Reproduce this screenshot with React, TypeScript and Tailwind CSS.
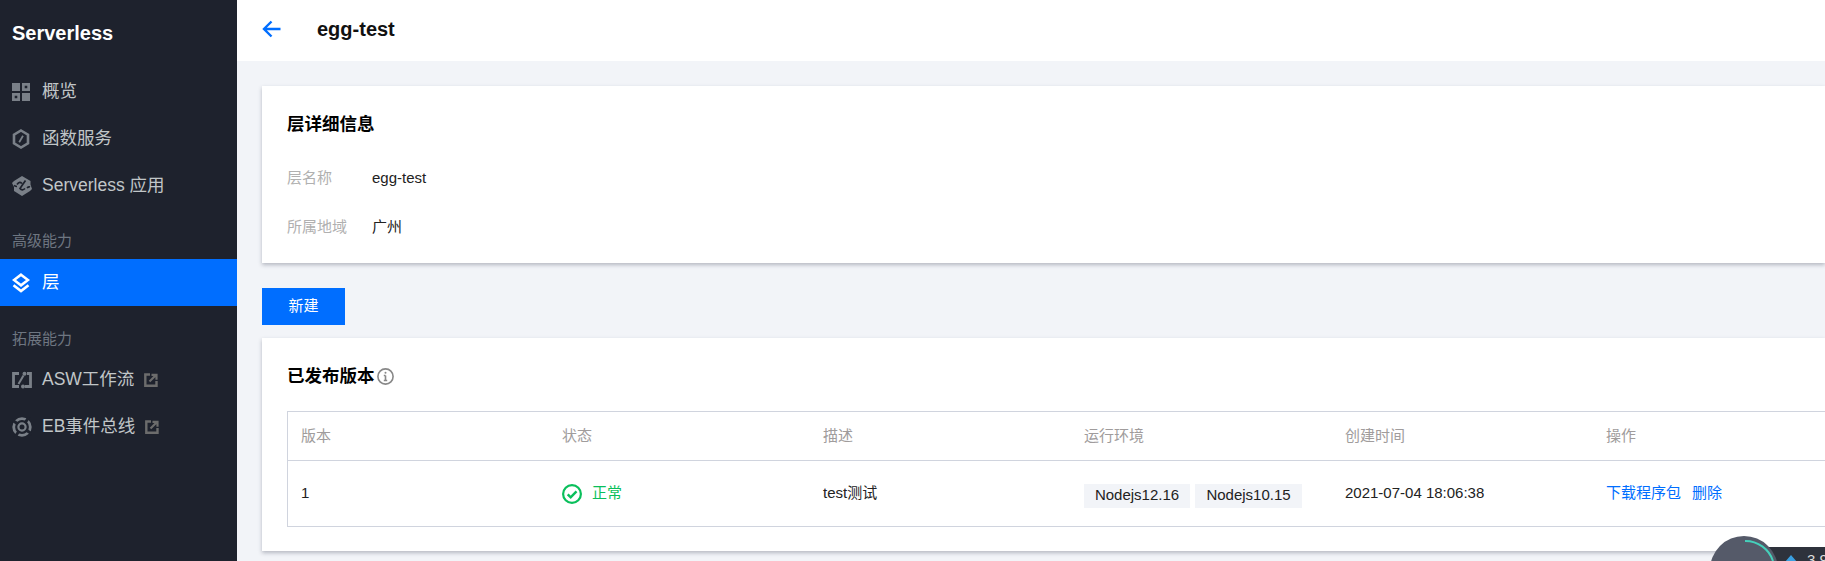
import type { ReactNode } from "react";

const cjk = "font-['Liberation_Sans','Noto_Sans_CJK_SC',sans-serif]";
const iconGray = "#7a8088";

function OverviewIcon() {
  return (
    <svg width="18" height="18" viewBox="0 0 18 18" fill={iconGray}>
      <path fillRule="evenodd" d="M0 0h8v8H0zM10 0h8v8h-8zm2.700 2.700v2.600h2.600V2.700zM0 10h8v8H0zm2.700 2.700v2.600h2.600v-2.600zM10 10h8v8h-8z" />
    </svg>
  );
}

function FunctionIcon() {
  return (
    <svg width="18" height="20" viewBox="0 0 18 20" fill="none" stroke={iconGray} strokeWidth="2.600">
      <path d="M9 1.500l7 4.200v8.600l-7 4.200-7-4.200V5.700z" />
      <path d="M11 6.800L7.200 13.200" strokeWidth="1.800" />
    </svg>
  );
}

function AppIcon() {
  return (
    <svg width="20" height="20" viewBox="0 0 20 20">
      <path d="M10 0l8.500 5v3.500L20 13l-2 2-8 5-8-5V11L0 7l2-2z" fill={iconGray} />
      <path d="M5 8.500C7 5.500 8.500 6 10 7.500M13.500 4.500L10 9.500l-2 3c1.500 2 3.500 1.500 5 0M15 12c1-1 2-1.500 3-1M2 9.500c1 .5 2 1 3 1" fill="none" stroke="#1e222d" strokeWidth="1.700" />
    </svg>
  );
}

function LayerIcon() {
  return (
    <svg width="18" height="20" viewBox="0 0 18 20" fill="none" stroke="#fff" strokeWidth="2.600">
      <path d="M9 1.700L16 7l-7 5.300L2 7z" />
      <path d="M1.500 12.200L9 18l7.500-5.800" />
    </svg>
  );
}

function FlowIcon() {
  return (
    <svg width="20" height="18" viewBox="0 0 20 18" fill="none" stroke={iconGray} strokeWidth="2.800">
      <path d="M7 2.500H1.500v13H7M13 15.500h5.500v-13H15" />
      <path d="M6.500 13l5-8.500" strokeWidth="2" />
      <circle cx="12.500" cy="2.800" r="2" fill={iconGray} stroke="none" />
      <circle cx="11" cy="15.500" r="2" fill={iconGray} stroke="none" />
    </svg>
  );
}

function EventIcon() {
  return (
    <svg width="20" height="20" viewBox="0 0 20 20" fill="none" stroke={iconGray}>
      <circle cx="10" cy="10" r="8.300" strokeWidth="2.800" />
      <circle cx="10" cy="10" r="3.600" strokeWidth="2.200" />
      {/* the dark cuts split the outer ring into separate arcs */}
      <path d="M0 3l6 4M20 17l-6-4M17 0l-4 6M3 20l4-6" stroke="#1e222d" strokeWidth="3" />
    </svg>
  );
}

function ExternalIcon() {
  return (
    <svg width="14" height="14" viewBox="0 0 14 14" fill="none" stroke="#6c6c6c" strokeWidth="2.400">
      <path d="M6 1.500H1.300v11.200h11.200V8" />
      <path d="M5.500 8.500L11.500 2.500M7.500 1.800h5v5" strokeWidth="2.200" />
    </svg>
  );
}

function NavItem({ icon, label, active, external }: { icon: ReactNode; label: string; active?: boolean; external?: boolean }) {
  return (
    <div className={`flex h-[47px] items-center pl-[12px] text-[17.5px] ${active ? "bg-[#006eff] text-white" : "text-[#c1c6c8]"}`}>
      <span className="flex w-[30px] shrink-0 items-center">{icon}</span>
      <span>{label}</span>
      {external && (
        <span className="ml-[10px] flex items-center">
          <ExternalIcon />
        </span>
      )}
    </div>
  );
}

function Sidebar() {
  return (
    <aside className="flex w-[237px] shrink-0 flex-col bg-[#1e222d]">
      <div className="flex h-[68px] items-center pb-[2px] pl-3 text-xl leading-none font-bold text-white">Serverless</div>
      <NavItem icon={<OverviewIcon />} label="概览" />
      <NavItem icon={<FunctionIcon />} label="函数服务" />
      <NavItem icon={<AppIcon />} label="Serverless 应用" />
      <div className="flex h-[50px] items-end pb-[8px] pl-3 text-[15px] leading-5 text-[#6e7681]">高级能力</div>
      <NavItem icon={<LayerIcon />} label="层" active />
      <div className="flex h-[50px] items-end pb-[7px] pl-3 text-[15px] leading-5 text-[#6e7681]">拓展能力</div>
      <NavItem icon={<FlowIcon />} label="ASW工作流" external />
      <NavItem icon={<EventIcon />} label="EB事件总线" external />
    </aside>
  );
}

const columns = ["版本", "状态", "描述", "运行环境", "创建时间", "操作"];

function Card({ children, className }: { children: ReactNode; className: string }) {
  return <section className={`bg-white pl-[25px] shadow-[0_2px_4px_rgba(54,58,80,0.32)] ${className}`}>{children}</section>;
}

export default function App() {
  return (
    <div className={`flex h-[561px] w-[1825px] overflow-hidden bg-[#f2f4f8] text-[15px] text-black ${cjk}`}>
      <Sidebar />
      <main className="relative min-w-0 flex-1">
        <header className="flex h-[61px] items-center bg-white pb-[3px] pl-[25px]">
          <svg width="19" height="18" viewBox="0 0 19 18" fill="none" stroke="#006eff" strokeWidth="2.400">
            <path d="M18.500 9H2M9.500 1.500L2 9l7.500 7.500" />
          </svg>
          <h1 className="ml-[36px] text-xl font-bold text-[#111]">egg-test</h1>
        </header>

        <div className="ml-[25px] pt-[25px]">
          <Card className="h-[177px] pt-[27px]">
            <h2 className="text-[17.5px] leading-[22px] font-bold">层详细信息</h2>
            <div className="mt-[33px] flex h-[20px] items-center">
              <span className="w-[85px] text-[#b0b0b0]">层名称</span>
              <span className="text-[#222]">egg-test</span>
            </div>
            <div className="mt-[29px] flex h-[20px] items-center">
              <span className="w-[85px] text-[#b0b0b0]">所属地域</span>
              <span className="text-[#222]">广州</span>
            </div>
          </Card>

          <button className="mt-[25px] flex h-[37px] w-[83px] items-center justify-center bg-[#006eff] text-white">新建</button>

          <Card className="mt-[13px] h-[213px] pt-[27px]">
            <h2 className="flex items-center text-[17.5px] leading-[22px] font-bold">
              已发布版本
              <svg className="ml-[2px]" width="17" height="17" viewBox="0 0 17 17" fill="none" stroke="#888" strokeWidth="1.600">
                <circle cx="8.500" cy="8.500" r="7.600" />
                <path d="M8.500 7.500v5M6.800 12.500h3.400M6.800 7.500h1.700" />
                <circle cx="8.500" cy="4.800" r="1" fill="#888" stroke="none" />
              </svg>
            </h2>
            <div className="mt-[24px] w-[1600px] border border-[#d0d4de]">
              <div className="grid h-[49px] grid-cols-[261px_261px_261px_261px_261px_1fr] items-center border-b border-[#d0d4de] pl-[13px] text-[#a09c9c]">
                {columns.map((c) => (
                  <span key={c}>{c}</span>
                ))}
              </div>
              <div className="grid h-[65px] grid-cols-[261px_261px_261px_261px_261px_1fr] items-center pl-[13px] text-[#222]">
                <span>1</span>
                <span className="flex items-center text-[#0abf5b]">
                  <svg width="20" height="20" viewBox="0 0 20 20" fill="none" stroke="#0abf5b" strokeWidth="2.200">
                    <circle cx="10" cy="10" r="8.900" />
                    <path d="M5.700 10.300l3 3 5.800-6" strokeWidth="2.400" />
                  </svg>
                  <span className="ml-[10px]">正常</span>
                </span>
                <span>test测试</span>
                <span className="mt-[4px] flex gap-[5px]">
                  <span className="flex h-[24px] w-[106px] items-center justify-center bg-[#f2f4f8]">Nodejs12.16</span>
                  <span className="flex h-[24px] w-[107px] items-center justify-center bg-[#f2f4f8]">Nodejs10.15</span>
                </span>
                <span>2021-07-04 18:06:38</span>
                <span className="flex gap-[11px] text-[#006eff]">
                  <span>下载程序包</span>
                  <span>删除</span>
                </span>
              </div>
            </div>
          </Card>
        </div>

        {/* floating network widget, cut off by the window in the screenshot */}
        <div className="absolute top-[547px] left-[1530px] flex h-[30px] w-[70px] items-start bg-[#2e323c] pt-[5px] pl-[18px] text-[15px] leading-none text-[#ddd]">
          <svg className="mt-[3px] mr-[10px] shrink-0" width="12" height="10" viewBox="0 0 12 10" fill="#3a9fe0">
            <path d="M6 0l6 7H8v3H4V7H0z" />
          </svg>
          <span>3.9</span>
        </div>
        <div className="absolute top-[536px] left-[1473px] h-[68px] w-[68px] rounded-full bg-[#555a69]">
          <svg className="absolute inset-0" width="68" height="68" viewBox="0 0 68 68" fill="none" stroke="#45d0bb" strokeWidth="2">
            <path d="M35 5a29 29 0 0 1 28 20" />
          </svg>
        </div>
      </main>
    </div>
  );
}
